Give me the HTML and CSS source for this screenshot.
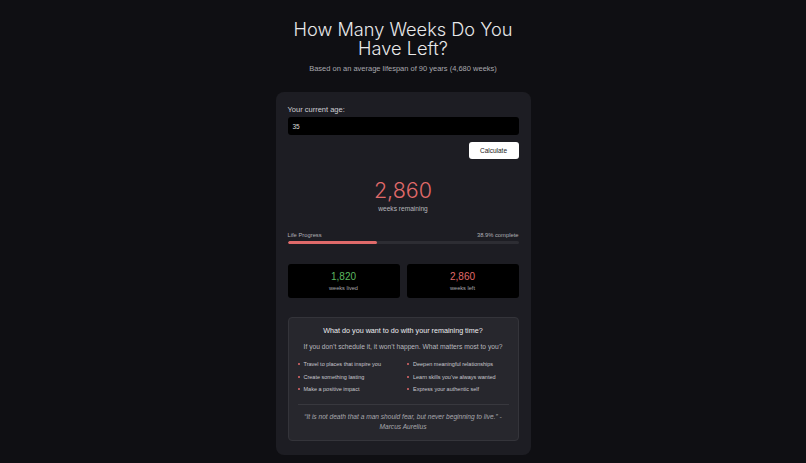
FILE: index.html
```html
<!DOCTYPE html>
<html lang="en">
<head>
<meta charset="utf-8">
<title>How Many Weeks Do You Have Left?</title>
<link rel="stylesheet" href="styles.css">
</head>
<body>
<main class="page">
  <header class="hero">
    <h1 class="title">How Many Weeks Do You Have Left?</h1>
    <p class="subtitle">Based on an average lifespan of 90 years (4,680 weeks)</p>
  </header>
  <section class="card">
    <label class="label" for="age">Your current age:</label>
    <div class="input" id="age">35</div>
    <div class="actions"><button class="btn">Calculate</button></div>
    <div class="result">
      <div class="big">2,860</div>
      <div class="big-label">weeks remaining</div>
    </div>
    <div class="progress">
      <div class="progress-head"><span>Life Progress</span><span>38.9% complete</span></div>
      <div class="track"><div class="fill" style="width:38.9%"></div></div>
    </div>
    <div class="stats">
      <div class="stat"><div class="stat-num green">1,820</div><div class="stat-label">weeks lived</div></div>
      <div class="stat"><div class="stat-num red">2,860</div><div class="stat-label">weeks left</div></div>
    </div>
    <div class="reflect">
      <h2 class="reflect-title">What do you want to do with your remaining time?</h2>
      <p class="reflect-sub">If you don’t schedule it, it won’t happen. What matters most to you?</p>
      <ul class="goals">
        <li>Travel to places that inspire you</li>
        <li>Deepen meaningful relationships</li>
        <li>Create something lasting</li>
        <li>Learn skills you’ve always wanted</li>
        <li>Make a positive impact</li>
        <li>Express your authentic self</li>
      </ul>
      <p class="quote">“It is not death that a man should fear, but never beginning to live.” - Marcus Aurelius</p>
    </div>
  </section>
</main>
</body>
</html>
```
FILE: styles.css
```css
* { box-sizing: border-box; }
html, body { margin: 0; padding: 0; }
body {
  background: #0f0f13;
  color: #e6e6e6;
  font-family: "Liberation Sans", Arial, sans-serif;
  height: 463px;
  overflow: hidden;
}
.page {
  width: 255px;
  margin: 0 auto;
  padding-top: 20px;
}
.hero { text-align: center; }
.title {
  margin: 0;
  font-family: Inter, "Liberation Sans", sans-serif;
  font-size: 18.2px;
  font-weight: 300;
  line-height: 19px;
  color: #e8e8ea;
}
.subtitle {
  margin: 6px 0 0;
  font-size: 7.5px;
  color: #a8a8ae;
  line-height: 10px;
}
.card {
  margin-top: 18px;
  background: #1d1d23;
  border-radius: 8px;
  padding: 14px 12px 14px;
}
.label {
  display: block;
  font-size: 7.5px;
  color: #cfcfd4;
  line-height: 8px;
}
.input {
  margin-top: 3px;
  height: 18px;
  background: #000;
  border-radius: 3px;
  font-size: 6.5px;
  color: #ddd;
  padding: 0 5px;
  display: flex;
  align-items: center;
}
.actions { display: flex; justify-content: flex-end; margin-top: 7px; }
.btn {
  width: 50px;
  height: 17px;
  background: #fff;
  color: #222;
  border: 0;
  border-radius: 3px;
  font-family: inherit;
  font-size: 6.5px;
  padding: 0;
}
.result { text-align: center; margin-top: 19px; }
.big {
  font-family: Inter, "Liberation Sans", sans-serif;
  font-size: 21.5px;
  font-weight: 300;
  color: #e06a6a;
  line-height: 24px;
}
.big-label {
  font-size: 6.6px;
  color: #b8b8be;
  line-height: 10px;
  margin-top: 2px;
}
.progress { margin-top: 17px; }
.progress-head {
  display: flex;
  justify-content: space-between;
  font-size: 5.8px;
  color: #b0b0b6;
  line-height: 8px;
}
.track {
  margin-top: 2px;
  height: 3px;
  background: #2d2d33;
  border-radius: 2px;
  overflow: hidden;
}
.fill { height: 100%; background: #e06a6a; border-radius: 2px; }
.stats {
  margin-top: 20px;
  display: grid;
  grid-template-columns: 1fr 1fr;
  gap: 7px;
}
.stat {
  background: #000;
  border-radius: 3px;
  height: 34px;
  display: flex;
  flex-direction: column;
  align-items: center;
  justify-content: center;
}
.stat-num { font-size: 10px; line-height: 12px; }
.stat-label { font-size: 5.6px; color: #a8a8ae; line-height: 8px; margin-top: 1px; }
.green { color: #5cb860; }
.red { color: #e06a6a; }
.reflect {
  margin-top: 19px;
  background: #27272d;
  border: 1px solid #34343a;
  border-radius: 4px;
  padding: 8px 9px 8px;
}
.reflect-title {
  margin: 0;
  text-align: center;
  font-size: 7.2px;
  font-weight: 400;
  color: #ececf0;
  line-height: 10px;
}
.reflect-sub {
  margin: 6px 0 0;
  text-align: center;
  font-size: 6.7px;
  color: #b8b8be;
  line-height: 10px;
}
.goals {
  list-style: none;
  margin: 8px 0 0;
  padding: 0;
  display: grid;
  grid-template-columns: 1fr 1fr;
  row-gap: 4px;
  column-gap: 8px;
}
.goals li {
  font-size: 5.5px;
  color: #c8c8ce;
  line-height: 8.5px;
  display: flex;
  align-items: center;
  gap: 4px;
}
.goals li::before {
  content: "";
  width: 2px;
  height: 2px;
  border-radius: 50%;
  background: #e06a6a;
  flex: none;
}
.quote {
  margin: 10px 0 0;
  border-top: 1px solid #38383e;
  padding-top: 7px;
  text-align: center;
  font-style: italic;
  font-size: 6.6px;
  color: #a8a8ae;
  line-height: 10px;
}
```
